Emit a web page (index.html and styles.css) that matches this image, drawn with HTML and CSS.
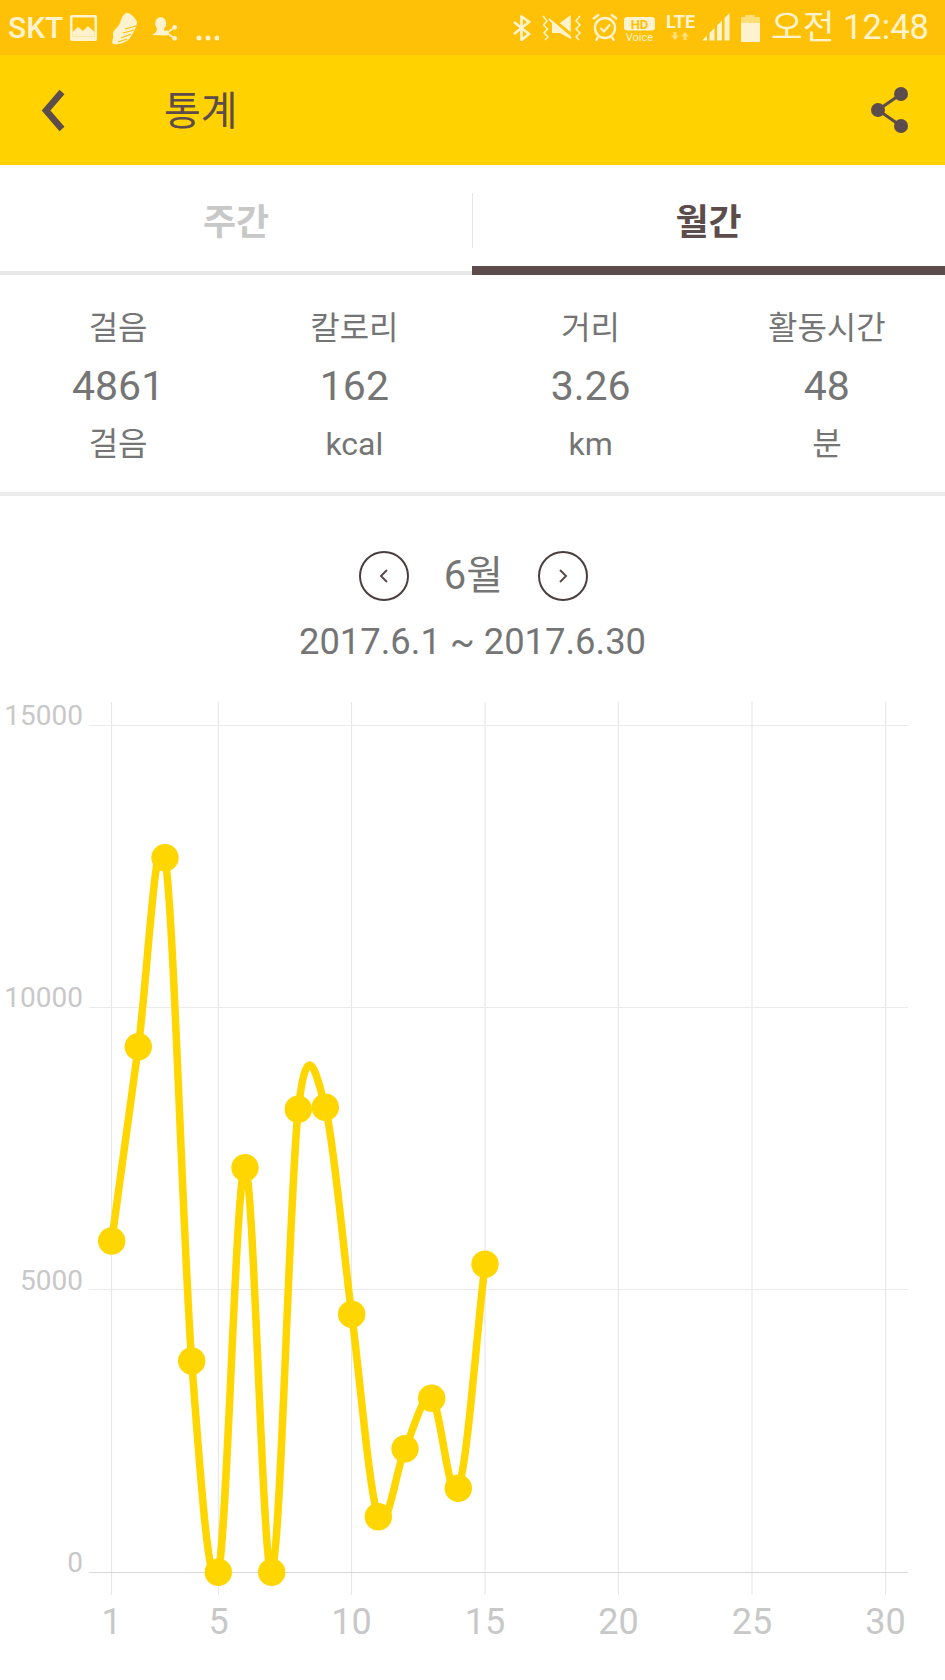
FILE: index.html
```html
<!DOCTYPE html>
<html lang="ko">
<head>
    <meta charset="UTF-8">
    <meta name="viewport" content="width=device-width, initial-scale=1.0">
    <title>통계</title>
    <link rel="stylesheet" href="styles.css">
</head>
<body>
    <!-- Status bar -->
    <div class="status-bar">
        <div class="status-left">
            <span class="carrier">SKT</span>
            <svg class="ic-image" width="27" height="26" viewBox="0 0 27 26">
                <rect width="27" height="26" rx="2" fill="#fff3cf"/>
                <rect x="2.5" y="2.5" width="22" height="19" fill="#ffc107"/>
                <path d="M2.5 21.5 V17 L8 12 L13 16 L18 11 L24.5 17 V21.5 Z" fill="#fff3cf"/>
            </svg>
            <svg class="ic-shoe" width="28" height="33" viewBox="0 0 28 33">
                <path d="M16 1 C19 0 25 5 27 10 C27 14 24 20 20 26 C16 31 8 33 3 32 C1 30 4 26 3 22 C2 20 6 17 9 13 C11 9 12 3 16 1 Z" fill="#fff3cf"/>
                <path d="M26 14 L15 17 M24 18 L13 21 M21 22 L11 26 M17 27 L8 30" stroke="#ffc107" stroke-width="1.2" fill="none"/>
            </svg>
            <svg class="ic-contact" width="26" height="26" viewBox="0 0 26 26">
                <ellipse cx="8.7" cy="8.5" rx="5.5" ry="6.5" fill="#fff3cf"/>
                <path d="M0 20 C3 18 5 17 5 13 H12 C12 17 14 17 16 19 L13 20.5 Z" fill="#fff3cf"/>
                <path d="M22.7 12.3 L14.7 18 L22.7 23.3" stroke="#fff3cf" stroke-width="1.6" fill="none"/>
                <circle cx="22.7" cy="12.3" r="2.4" fill="#fff3cf"/>
                <circle cx="14.7" cy="18" r="2.4" fill="#fff3cf"/>
                <circle cx="22.7" cy="23.3" r="2.4" fill="#fff3cf"/>
            </svg>
            <svg class="ic-more" width="23" height="6" viewBox="0 0 23 6">
                <circle cx="3" cy="3" r="2.5" fill="#fff3cf"/>
                <circle cx="12" cy="3" r="2.5" fill="#fff3cf"/>
                <circle cx="21" cy="3" r="2.5" fill="#fff3cf"/>
            </svg>
        </div>
        <div class="status-right">
            <svg width="18" height="26" viewBox="0 0 18 26">
                <path d="M1 7 L16 19 L8.5 25 V1.5 L16 7 L1 19" stroke="#fff3cf" stroke-width="2.6" fill="none"/>
            </svg>
            <svg class="ic-mute" width="42" height="26" viewBox="0 0 42 26">
                <path d="M1 1 L5 6 L1.5 10 L5.5 14 L2 18 L6 22 L3 25" stroke="#fff3cf" stroke-width="1.5" fill="none"/>
                <path d="M38 1 L34 6 L38 10 L34 14 L38 18 L34 22 L37 25" stroke="#fff3cf" stroke-width="1.5" fill="none"/>
                <path d="M10 8 H18 L28.7 0 V24 L18 18 H10 Z" fill="#fff3cf"/>
                <path d="M7 1 L32 22" stroke="#ffc107" stroke-width="3" fill="none"/>
                <path d="M7 4 L29 23" stroke="#fff3cf" stroke-width="1.8" fill="none"/>
            </svg>
            <svg class="ic-alarm" width="28" height="29" viewBox="0 0 28 29">
                <circle cx="14" cy="15" r="10" stroke="#fff3cf" stroke-width="2.4" fill="none"/>
                <path d="M9.5 15 L13 18.5 L19 11.5" stroke="#fff3cf" stroke-width="2.2" fill="none"/>
                <path d="M2 6 L8 1.5 M26 6 L20 1.5 M7 24 L5 28 M21 24 L23 28" stroke="#fff3cf" stroke-width="2.2" fill="none"/>
            </svg>
            <svg class="ic-hd" width="31" height="31" viewBox="0 -3 31 31">
                <rect width="31" height="13.5" rx="3" fill="#fff3cf"/>
                <text class="hd-text" x="15.5" y="11.6">HD</text>
                <text class="voice-text" x="15.5" y="24">Voice</text>
            </svg>
            <svg class="ic-lte" width="37" height="40" viewBox="-3 -7 37 40">
                <text class="lte-text" x="15.5" y="12">LTE</text>
                <path d="M10 24 L6 19.5 H8.5 V16 H11.5 V19.5 H14 Z M20 16 L24 20.5 H21.5 V24 H18.5 V20.5 H16 Z" fill="#ffdd77"/>
            </svg>
            <svg class="ic-signal" width="28" height="28" viewBox="0 0 28 28">
                <path d="M0 27.5 L5 22.5 V27.5 Z M7.5 20 L12.5 15 V27.5 H7.5 Z M15 12.5 L20 7.5 V27.5 H15 Z M22.5 5 L27.5 0 V27.5 H22.5 Z" fill="#fff3cf"/>
            </svg>
            <svg class="ic-battery" width="19" height="27" viewBox="0 0 19 27">
                <rect x="4" y="0" width="10" height="2" fill="#ffdd77"/>
                <rect x="0" y="2" width="19" height="6" fill="#ffdd77"/>
                <rect x="0" y="8" width="19" height="19" fill="#fff3cf"/>
            </svg>
            <span class="clock">오전 12:48</span>
        </div>
    </div>

    <!-- App bar -->
    <div class="app-bar">
        <svg class="back-icon" width="26" height="44" viewBox="0 0 26 44">
            <path d="M21 3 L5 21.5 L21 40" stroke="#5d4c4c" stroke-width="6.5" fill="none"/>
        </svg>
        <h1 class="page-title">통계</h1>
        <svg class="share-icon" width="38" height="46" viewBox="0 0 38 46">
            <path d="M30 7 L7 23 L30 39" stroke="#5d4c4c" stroke-width="3" fill="none"/>
            <circle cx="30" cy="7" r="7" fill="#5d4c4c"/>
            <circle cx="7" cy="23" r="7" fill="#5d4c4c"/>
            <circle cx="30" cy="39" r="7" fill="#5d4c4c"/>
        </svg>
    </div>

    <!-- Week / month tabs -->
    <div class="tabs">
        <div class="tab tab-first">주간</div>
        <div class="tab active">월간</div>
    </div>

    <!-- Totals -->
    <div class="stats">
        <div class="stat"><span>걸음</span><strong>4861</strong><span>걸음</span></div>
        <div class="stat"><span>칼로리</span><strong>162</strong><span>kcal</span></div>
        <div class="stat"><span>거리</span><strong>3.26</strong><span>km</span></div>
        <div class="stat"><span>활동시간</span><strong>48</strong><span>분</span></div>
    </div>

    <!-- Month picker -->
    <div class="pager">
        <button class="pager-btn" type="button">
            <svg width="12" height="16" viewBox="0 0 12 16"><path d="M9 2 L3 8 L9 14" stroke="#5d4c4c" stroke-width="2" fill="none"/></svg>
        </button>
        <span class="pager-month">6월</span>
        <button class="pager-btn" type="button">
            <svg width="12" height="16" viewBox="0 0 12 16"><path d="M3 2 L9 8 L3 14" stroke="#5d4c4c" stroke-width="2" fill="none"/></svg>
        </button>
    </div>
    <div class="date-range">2017.6.1 ~ 2017.6.30</div>

    <!-- Daily steps chart -->
    <svg class="chart" width="945" height="990" viewBox="0 690 945 990">
        <g class="grid-v">
            <path d="M111.5 702 V1595 M218.5 702 V1595 M351.5 702 V1595 M485 702 V1595 M618.5 702 V1595 M752 702 V1595 M885.5 702 V1595"/>
        </g>
        <g class="grid-h">
            <path d="M89 725.5 H908 M89 1007.5 H908 M89 1289.5 H908"/>
        </g>
        <path class="grid-base" d="M89 1572.5 H908"/>

        <g class="y-labels">
            <text x="83" y="725">15000</text>
            <text x="83" y="1007">10000</text>
            <text x="83" y="1290">5000</text>
            <text x="83" y="1572">0</text>
        </g>
        <g class="x-labels">
            <text x="111.5" y="1634">1</text>
            <text x="218.5" y="1634">5</text>
            <text x="351.5" y="1634">10</text>
            <text x="485" y="1634">15</text>
            <text x="618.5" y="1634">20</text>
            <text x="752" y="1634">25</text>
            <text x="885.5" y="1634">30</text>
        </g>

        <path class="line" d="M111.7 1241
            C120.6 1176.2 129.4 1110.6 138.3 1046.7
            C147.2 982.8 156.1 805.3 165 857.7
            C173.9 910.1 182.8 1241.9 191.7 1361
            C200.6 1480.1 209.4 1604.5 218.3 1572.3
            C227.2 1540.1 236.1 1167.7 245 1167.7
            C253.9 1167.7 262.8 1582 271.7 1572.3
            C280.6 1562.6 289.4 1186.8 298.3 1109.3
            C307.2 1031.8 316.4 1073.1 325.3 1107.3
            C334.2 1141.5 342.8 1246.1 351.7 1314.3
            C360.6 1382.5 369.4 1494.3 378.3 1516.7
            C387.2 1539.1 396.1 1468.4 405 1448.7
            C413.9 1429 422.8 1391.7 431.7 1398.3
            C440.6 1404.9 449.4 1510.6 458.3 1488.3
            C467.2 1466 476.1 1339 485 1264.3"/>
        <g class="points">
            <circle cx="111.7" cy="1241" r="13.7"/>
            <circle cx="138.3" cy="1046.7" r="13.7"/>
            <circle cx="165" cy="857.7" r="13.7"/>
            <circle cx="191.7" cy="1361" r="13.7"/>
            <circle cx="218.3" cy="1572.3" r="13.7"/>
            <circle cx="245" cy="1167.7" r="13.7"/>
            <circle cx="271.7" cy="1572.3" r="13.7"/>
            <circle cx="298.3" cy="1109.3" r="13.7"/>
            <circle cx="325.3" cy="1107.3" r="13.7"/>
            <circle cx="351.7" cy="1314.3" r="13.7"/>
            <circle cx="378.3" cy="1516.7" r="13.7"/>
            <circle cx="405" cy="1448.7" r="13.7"/>
            <circle cx="431.7" cy="1398.3" r="13.7"/>
            <circle cx="458.3" cy="1488.3" r="13.7"/>
            <circle cx="485" cy="1264.3" r="13.7"/>
        </g>
    </svg>
</body>
</html>
```

FILE: styles.css
```css
body {
    margin: 0;
    background: white;
    font-family: Roboto, "Noto Sans CJK KR", sans-serif;
    color: #757575;
}
.status-bar {
    height: 55px;
    background: #ffc107;
    color: #fff3cf;
    display: flex;
    justify-content: space-between;
    align-items: center;
    padding: 0 16px 0 8px;
}
.status-left, .status-right {
    display: flex;
    align-items: center;
}
.carrier {
    font-size: 30px;
    font-weight: 500;
    line-height: 55px;
}
.ic-image { margin-left: 7px; margin-top: 1px; }
.ic-shoe { margin-left: 13px; margin-top: 1px; }
.ic-contact { margin-left: 14px; margin-top: 1px; }
.ic-more { margin-left: 18px; margin-top: 21px; }
.ic-mute { margin-left: 11px; }
.ic-alarm { margin-left: 7px; }
.ic-hd { margin-left: 5px; margin-top: 3px; }
.ic-lte { margin-left: 7px; margin-top: 3px; }
.ic-signal { margin-left: 3px; margin-top: -1px; }
.ic-battery { margin-left: 11px; margin-top: 1px; }
.clock {
    font-size: 34.5px;
    line-height: 55px;
    margin-left: 11px;
}
.hd-text {
    font-size: 13px;
    font-weight: 700;
    fill: #ffc107;
    text-anchor: middle;
}
.voice-text {
    font-size: 11px;
    fill: #fff3cf;
    text-anchor: middle;
}
.lte-text {
    font-size: 18px;
    font-weight: 700;
    fill: #fff3cf;
    text-anchor: middle;
}

.app-bar {
    height: 110px;
    background: #ffd200;
    display: flex;
    align-items: center;
    padding: 0 36px 0 41px;
}
.back-icon {
    flex: none;
    margin-top: 2px;
}
.page-title {
    flex: 1;
    margin: 4px 0 0 97px;
    font-size: 40px;
    font-weight: 400;
    line-height: 50px;
    color: #5d4c4c;
}
.share-icon {
    flex: none;
}

.tabs {
    display: flex;
    height: 110px;
}
.tab {
    flex: 1;
    box-sizing: border-box;
    position: relative;
    padding-top: 36px;
    text-align: center;
    font-size: 36px;
    font-weight: 700;
    line-height: 44px;
    color: #c8c8c8;
    border-bottom: 4px solid #e8e8e8;
}
.tab-first {
    flex: 0 0 472px;
}
.tab-first::after {
    content: "";
    position: absolute;
    right: -1px;
    top: 28px;
    height: 55px;
    width: 1px;
    background: #e4e4e4;
}
.tab.active {
    color: #5d4c4c;
    border-bottom: 9px solid #5d4c4c;
}

.stats {
    display: grid;
    grid-template-columns: repeat(4, 1fr);
    padding: 24px 0 19px;
    border-bottom: 4px solid #ececec;
}
.stat {
    display: flex;
    flex-direction: column;
    align-items: center;
    font-size: 32px;
    line-height: 58px;
}
.stat strong {
    font-size: 41px;
    font-weight: 400;
}

.pager {
    display: flex;
    justify-content: center;
    align-items: center;
    gap: 35px;
    margin-top: 55px;
    padding-left: 2px;
}
.pager-btn {
    width: 50px;
    height: 50px;
    padding: 0;
    display: flex;
    align-items: center;
    justify-content: center;
    background: white;
    border: 2px solid #4a3d3d;
    border-radius: 50%;
}
.pager-month {
    font-size: 40px;
    line-height: 50px;
}
.date-range {
    margin-top: 16px;
    margin-bottom: 23px;
    text-align: center;
    font-size: 36.4px;
    line-height: 50px;
}

.chart {
    display: block;
}
.grid-v path {
    stroke: #e8e8e8;
    stroke-width: 1.2;
    fill: none;
}
.grid-h path {
    stroke: #ebebeb;
    stroke-width: 1.2;
    fill: none;
}
.grid-base {
    stroke: #d9d9d9;
    stroke-width: 1.2;
    fill: none;
}
.y-labels text {
    font-size: 28px;
    fill: #c8c8c8;
    text-anchor: end;
}
.x-labels text {
    font-size: 36px;
    fill: #c8c8c8;
    text-anchor: middle;
}
.line {
    stroke: #ffd600;
    stroke-width: 7.5;
    fill: none;
}
.points circle {
    fill: #ffd600;
}
```
